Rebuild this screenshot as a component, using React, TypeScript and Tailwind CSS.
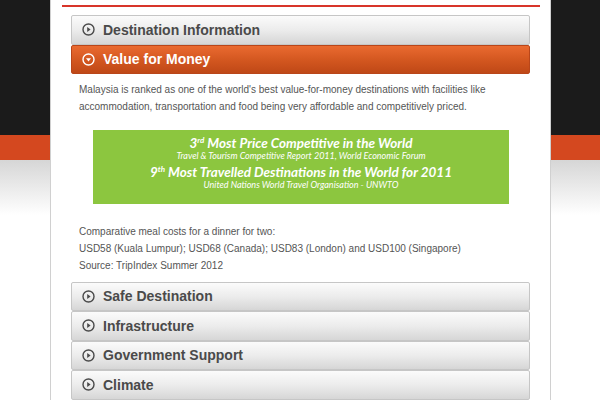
import React from "react";

function PlayIcon({ open = false }: { open?: boolean }) {
  return (
    <svg width="13" height="13" viewBox="0 0 13 13" className="shrink-0">
      <circle cx="6.5" cy="6.5" r="5.5" fill="none" stroke="currentColor" strokeWidth="1.4" />
      {open ? (
        <path d="M4 5.2 L9 5.2 L6.5 8.4 Z" fill="currentColor" />
      ) : (
        <path d="M5.2 4 L8.6 6.5 L5.2 9 Z" fill="currentColor" />
      )}
    </svg>
  );
}

function Header({ title, open = false }: { title: string; open?: boolean }) {
  if (open) {
    return (
      <div className="h-[29px] flex items-center gap-[8px] pl-[10px] rounded-[2px] border border-[#b9461a] bg-[linear-gradient(to_bottom,#ea6a30,#d2561f_55%,#bf4817)] text-white">
        <PlayIcon open />
        <span className="text-[14px] font-bold leading-none">{title}</span>
      </div>
    );
  }
  return (
    <div className="h-[29.5px] flex items-center gap-[8px] pl-[10px] rounded-[2px] border border-[#c6c6c6] bg-[linear-gradient(to_bottom,#fbfbfb,#ececec_50%,#d6d6d6)] text-[#4a4a4a]">
      <PlayIcon />
      <span className="text-[14px] font-bold leading-none">{title}</span>
    </div>
  );
}

export default function App() {
  return (
    <div className="w-[600px] h-[400px] overflow-hidden bg-[linear-gradient(to_bottom,#1b1b1b_0,#1b1b1b_135px,#d4481f_135px,#d4481f_160px,#d6d6d6_160px,#ffffff_215px)] font-['Liberation_Sans',Arial,sans-serif]">
      <div className="ml-[50px] w-[501px] h-[400px] bg-white border-x border-[#d0d0d0]">
        <div className="ml-[11px] mr-[10px] pt-[5px] border-b-2 border-[#d8352a]" />
        <div className="pl-[20px] pr-[20px] pt-[8px]">
          <Header title="Destination Information" />
          <Header title="Value for Money" open />

          <p className="mt-[7px] pl-[8px] text-[10px] leading-[17px] text-[#555]">
            Malaysia is ranked as one of the world's best value-for-money destinations with facilities like
            accommodation, transportation and food being very affordable and competitively priced.
          </p>

          <div className="mt-[15px] ml-[22px] w-[416px] h-[74px] bg-[#8cc63f] text-white text-center italic font-['Lato','Open_Sans',sans-serif] pt-[5px]">
            <div className="text-[13.5px] font-bold leading-[16px]">
              3<span className="relative -top-[5px] text-[8px] leading-none">rd</span> Most Price Competitive in the World
            </div>
            <div className="text-[9px] leading-[9px]">
              Travel &amp; Tourism Competitive Report 2011, World Economic Forum
            </div>
            <div className="mt-[5px] text-[13.5px] font-bold leading-[15px]">
              9<span className="relative -top-[5px] text-[8px] leading-none">th</span> Most Travelled Destinations in the World for 2011
            </div>
            <div className="text-[9px] leading-[9px]">United Nations World Travel Organisation - UNWTO</div>
          </div>

          <div className="mt-[19px] pl-[8px] text-[10px] leading-[17px] text-[#555]">
            <div>Comparative meal costs for a dinner for two:</div>
            <div>USD58 (Kuala Lumpur); USD68 (Canada); USD83 (London) and USD100 (Singapore)</div>
            <div>Source: TripIndex Summer 2012</div>
          </div>

          <div className="mt-[8px]">
            <Header title="Safe Destination" />
            <Header title="Infrastructure" />
            <Header title="Government Support" />
            <Header title="Climate" />
          </div>
        </div>
      </div>
    </div>
  );
}
